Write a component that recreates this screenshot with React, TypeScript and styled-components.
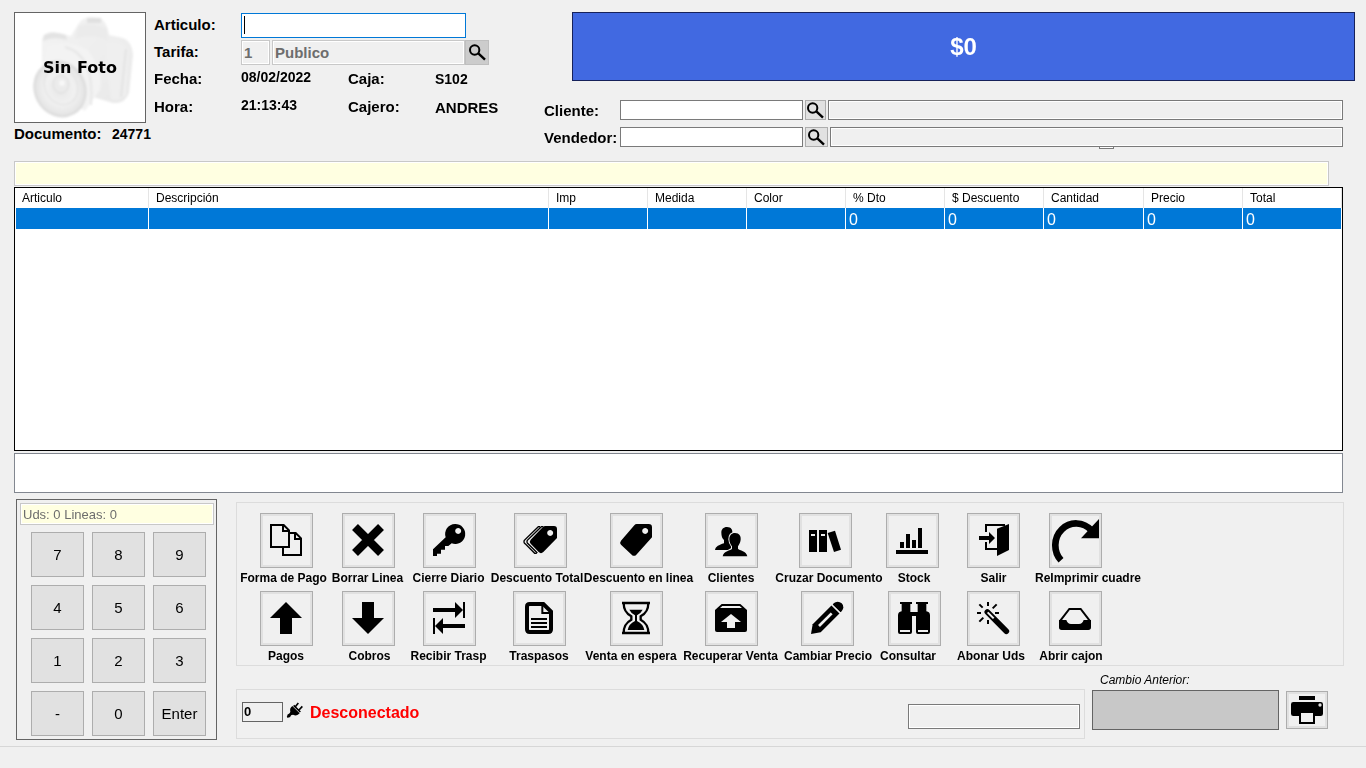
import React from 'react';
import styled, { createGlobalStyle } from 'styled-components';

const FACE = '#f0f0f0';
const CREAM = '#ffffe1';

const GlobalStyle = createGlobalStyle`
  * { box-sizing: border-box; }
  body {
    margin: 0;
    background: ${FACE};
    color: #000;
    font-family: "Liberation Sans", Arial, sans-serif;
    font-size: 12px;
  }
  button, input { font-family: inherit; margin: 0; border-radius: 0; }
`;

const Screen = styled.div`
  min-width: 1180px;
`;

const Header = styled.header`
  display: flex;
  padding: 12px 11px 0 14px;
  height: 149px;
`;

const PhotoColumn = styled.div`
  width: 140px;
  flex: none;
`;

const Photo = styled.figure`
  margin: 0;
  width: 132px;
  height: 111px;
  border: 1px solid #646464;
  background: #fff;
  display: grid;
  place-items: center;
`;

const CameraArt = styled.svg`
  grid-area: 1 / 1;
  width: 130px;
  height: 109px;
`;

const PhotoText = styled.figcaption`
  grid-area: 1 / 1;
  font: bold 16px "DejaVu Sans", sans-serif;
  z-index: 1;
`;

const DocumentRow = styled.div`
  display: flex;
  padding-top: 2px;
  line-height: 18px;
`;

const Label = styled.label<{ $w?: number }>`
  flex: none;
  width: ${p => (p.$w ? `${p.$w}px` : 'auto')};
  font-size: 15px;
  font-weight: bold;
  white-space: nowrap;
`;

const FieldLabel = styled(Label)`
  padding-bottom: 2px;
`;

const Value = styled.output<{ $w?: number; $raised?: boolean; $size?: number }>`
  flex: none;
  width: ${p => (p.$w ? `${p.$w}px` : 'auto')};
  padding-bottom: ${p => (p.$raised ? 4 : 0)}px;
  font-size: ${p => p.$size || 14}px;
  font-weight: bold;
`;

const Fields = styled.div`
  flex: none;
  width: 390px;
  padding-top: 1px;
`;

const FieldRow = styled.div<{ $h: number; $gap?: number }>`
  display: flex;
  align-items: center;
  height: ${p => p.$h}px;
  margin-bottom: ${p => p.$gap || 0}px;
`;

const TextBox = styled.input<{ $w?: number; $h: number; $line?: string; $fill?: string; $inset?: boolean }>`
  ${p => (p.$w ? `flex: none; width: ${p.$w}px;` : 'flex: 1; min-width: 0;')}
  height: ${p => p.$h}px;
  border: 1px solid ${p => p.$line || '#7a7a7a'};
  background: ${p => p.$fill || '#fff'};
  box-shadow: ${p => (p.$inset ? 'inset 0 0 0 1px #fff' : 'none')};
  padding: 0 2px;
  font-size: 15px;
  font-weight: bold;
  color: #6d6d6d;
  outline: none;
`;

const ArticleBox = styled(TextBox)`
  color: #000;
  caret-color: transparent;
  background: linear-gradient(#000, #000) 2px 2px / 1px 18px no-repeat #fff;
`;

const TariffGroup = styled.div`
  display: flex;
  gap: 2px;
`;

const LookupButton = styled.button<{ $w: number; $h: number; $fill?: string }>`
  flex: none;
  width: ${p => p.$w}px;
  height: ${p => p.$h}px;
  padding: 0;
  border: 1px solid ${p => (p.$fill ? '#bfbfbf' : '#adadad')};
  background: ${p => p.$fill || '#e1e1e1'};
  display: grid;
  place-items: center;
`;

const SaleColumn = styled.div`
  flex: 1;
  min-width: 0;
`;

const TotalBox = styled.div`
  margin-left: 28px;
  height: 69px;
  border: 1px solid #16215a;
  background: #4169e1;
  color: #fff;
  font-size: 24px;
  font-weight: bold;
  display: grid;
  place-items: center;
`;

const Parties = styled.div`
  padding: 18px 12px 0 0;
`;

const PartyRow = styled.div`
  position: relative;
  display: flex;
  align-items: center;
  gap: 2px;
  height: 22px;
  margin-bottom: 5px;
`;

const Notch = styled.span`
  position: absolute;
  right: 229px;
  top: 21px;
  width: 15px;
  height: 2px;
  border: 1px solid #7a7a7a;
  border-top: 0;
  background: #fff;
`;

const Main = styled.main`
  padding: 12px 22px 0 14px;
`;

const MessageBar = styled.div`
  height: 25px;
  margin-right: 15px;
  border: 1px solid #c8c8c8;
  background: ${CREAM};
  box-shadow: inset 0 0 0 1px #fff;
`;

const GridFrame = styled.div`
  height: 264px;
  margin: 1px 1px 2px 0;
  border: 1px solid #000;
  background: #fff;
`;

const LinesTable = styled.table`
  width: 100%;
  table-layout: fixed;
  border-collapse: separate;
  border-spacing: 0;
`;

const HeadCell = styled.th<{ $w?: number }>`
  width: ${p => (p.$w ? `${p.$w}px` : 'auto')};
  height: 20px;
  padding: 0 0 0 7px;
  border-right: 1px solid #e5e5e5;
  font-size: 12px;
  font-weight: normal;
  line-height: 16px;
  text-align: left;
`;

const Cell = styled.td`
  height: 21px;
  padding: 2px 0 0 3px;
  border-right: 1px solid #fff;
  background: #0078d7;
  color: #fff;
  font-size: 16px;
  line-height: 19px;

  &:first-child { border-left: 1px solid #fff; }
`;

const NotesBox = styled.div`
  height: 40px;
  margin-right: 1px;
  border: 1px solid #828790;
  background: #fff;
`;

const Bottom = styled.div`
  display: flex;
  align-items: flex-start;
  padding: 6px 0 6px 2px;
  gap: 19px;
`;

const Keypad = styled.section`
  flex: none;
  width: 201px;
  height: 241px;
  border: 1px solid #646464;
  padding: 3px 2px 0 3px;
`;

const CountBox = styled.output`
  display: block;
  height: 22px;
  padding-left: 2px;
  border: 1px solid #c8c8c8;
  background: ${CREAM};
  box-shadow: inset 0 0 0 1px #fff;
  color: #6d6d6d;
  font-size: 13px;
  line-height: 21px;
`;

const Keys = styled.div`
  display: grid;
  grid-template-columns: repeat(3, 53px);
  grid-auto-rows: 45px;
  gap: 8px;
  padding: 7px 0 0 11px;
`;

const Key = styled.button`
  padding: 0;
  border: 1px solid #adadad;
  background: #e1e1e1;
  color: #000;
  font-size: 15px;
`;

const RightSide = styled.div`
  flex: 1;
  min-width: 0;
`;

const Actions = styled.section`
  height: 164px;
  margin-top: 3px;
  border: 1px solid #dcdcdc;
  padding-top: 10px;
`;

const IconRow = styled.div<{ $cols: string }>`
  display: grid;
  grid-template-columns: ${p => p.$cols};
  justify-items: center;
  padding-left: 8px;
`;

const CaptionRow = styled.div<{ $cols: string }>`
  display: grid;
  grid-template-columns: ${p => p.$cols};
  padding: 2px 0 5px 4px;
`;

const Caption = styled.label`
  display: flex;
  justify-content: center;
  font-size: 12px;
  font-weight: bold;
  line-height: 16px;
  white-space: nowrap;
`;

const ActionButton = styled.button<{ $w?: number; $h?: number }>`
  width: ${p => p.$w || 53}px;
  height: ${p => p.$h || 55}px;
  padding: 0 1px 1px 0;
  border: 1px solid #adadad;
  background: ${FACE};
  box-shadow: inset 0 0 0 2px #e1e1e1;
  display: grid;
  place-items: center;
  color: #000;
`;

const Glyph = styled.svg`
  display: block;
  overflow: visible;
  fill: currentColor;
`;

const StatusRow = styled.div`
  display: flex;
  align-items: flex-end;
  gap: 7px;
  padding: 6px 16px 0 0;
`;

const StatusPanel = styled.section`
  flex: 1;
  min-width: 0;
  height: 50px;
  border: 1px solid #dcdcdc;
  padding: 0 4px 0 5px;
  display: flex;
  align-items: center;
`;

const QueueBox = styled.output`
  width: 41px;
  height: 20px;
  margin-bottom: 4px;
  border: 1px solid #646464;
  padding-left: 1px;
  font-weight: bold;
  font-size: 13px;
  line-height: 17px;
`;

const PlugSlot = styled.span`
  width: 16px;
  margin: 0 7px 8px 4px;
`;

const Connection = styled.strong`
  flex: 1;
  color: #f00;
  font-size: 16px;
  line-height: 20px;
  padding-bottom: 2px;
`;

const StatusBoxSlot = styled.div`
  display: flex;
  width: 172px;
  padding-top: 4px;
`;

const ChangeBlock = styled.div`
  width: 187px;
  padding-bottom: 9px;
`;

const ChangeLabel = styled.label`
  display: block;
  padding-left: 8px;
  margin-bottom: 2px;
  font-size: 12px;
  font-style: italic;
  line-height: 16px;
`;

const ChangeBox = styled.output`
  display: block;
  height: 40px;
  border: 1px solid #646464;
  background: #c8c8c8;
`;

const PrintSlot = styled.div`
  padding-bottom: 10px;
`;

const Footer = styled.footer`
  border-top: 1px solid #d7d7d7;
  height: 22px;
`;

const SearchIcon = () => (
  <Glyph width="17" height="17" viewBox="0 0 51 51" aria-hidden="true">
    <circle cx="17" cy="18" r="14" fill="none" stroke="#000" strokeWidth="6" />
    <path d="M28 28L48 47" stroke="#000" strokeWidth="7" />
  </Glyph>
);

const art: Record<string, React.ReactNode> = {
  copy: (
    <g fill="none" stroke="#000" strokeWidth="6">
      <path d="M3 3H41L57 19V69H3Z M39 3V21H57" />
      <path d="M60 27H77L93 43V93H39V72 M75 27V45H93" />
    </g>
  ),
  cross: <path d="M9 9L87 87M87 9L9 87" stroke="#000" strokeWidth="25" />,
  key: (
    <path
      fillRule="evenodd"
      d="M66 0a30 30 0 1 1-10 58L46 66H36V77H24V89H12V96H0V76L38 40A30 30 0 0 1 66 0ZM75 12a9 9 0 1 0 1 0Z"
    />
  ),
  tags: (
    <>
      <path
        fillRule="evenodd"
        d="M64 6H90Q99 6 99 15V42L58 84Q51 91 44 84L20 59Q15 53 20 47L56 10Q60 6 64 6ZM78 18a9 9 0 1 0 1 0Z"
      />
      <path
        d="M48 8H43L1 49Q-1 53 1 57L32 88H38M58 8H52L10 49Q8 53 10 57L40 87"
        fill="none"
        stroke="#000"
        strokeWidth="4"
      />
    </>
  ),
  tag: (
    <path
      fillRule="evenodd"
      d="M50 0H86Q96 0 96 10V40L49 92Q42 99 35 92L3 62Q-2 56 3 50L43 4Q46 0 50 0ZM75 12a9 9 0 1 0 1 0Z"
    />
  ),
  users: (
    <>
      <path d="M36 9C49 9 53 18 52 28C51 38 47 44 45 48V56C52 60 60 64 62 78H0C2 67 12 63 27 58V48C22 44 19 36 19 26C19 16 25 9 36 9Z" />
      <path
        d="M60 27C73 27 78 36 77 47C76 57 71 62 69 67V74C74 80 94 80 97 97H23C26 80 47 80 51 74V67C47 62 43 56 43 46C43 35 49 27 60 27Z"
        stroke={FACE}
        strokeWidth="6"
        paintOrder="stroke"
      />
    </>
  ),
  binders: (
    <>
      <path d="M0 18H24V84H0ZM30 18H54V84H30ZM56 27L78 20L96 77L75 84Z" />
      <path d="M6 30H18V36H6ZM36 30H48V36H36Z" fill={FACE} />
    </>
  ),
  chart: <path d="M0 78H96V90H0ZM12 54H24V72H12ZM30 30H42V72H30ZM48 48H60V72H48ZM66 12H78V72H66Z" />,
  exit: (
    <>
      <path d="M27 24V3H84M27 54V75H62" fill="none" stroke="#000" strokeWidth="6" />
      <path d="M60 14L96 0V78L60 96ZM6 36H36V24L54 42L36 60V48H6Z" />
    </>
  ),
  up: <path d="M48 0L96 48H66V96H30V48H0Z" />,
  down: <path d="M30 0H66V48H96L48 96L0 48H30Z" />,
  swap: (
    <path d="M0 18H66V0L90 24V0H96V48H90V24L66 48V30H0ZM0 48H6V72L30 48V66H96V78H30V96L6 72V96H0Z" />
  ),
  doc: (
    <>
      <path d="M20 6H61L84 29V82Q84 90 76 90H20Q12 90 12 82V14Q12 6 20 6Z" fill="none" stroke="#000" strokeWidth="12" />
      <path d="M58 8V33H86M24 51H72M24 63H72M24 75H72" fill="none" stroke="#000" strokeWidth="6" />
    </>
  ),
  hourglass: (
    <>
      <path
        d="M6 3H90M6 93H90M11 3C11 24 18 34 34 43V53C18 62 11 72 11 93M85 3C85 24 78 34 62 43V53C78 62 85 72 85 93"
        fill="none"
        stroke="#000"
        strokeWidth="7"
      />
      <path d="M28 23H68Q64 32 51 40V57Q70 66 73 84H23Q26 66 45 57V40Q32 32 28 23Z" />
    </>
  ),
  box: (
    <>
      <path d="M20 6H76L96 24V84Q96 90 90 90H6Q0 90 0 84V24Z" />
      <path d="M22 12H74L81 18H15ZM48 36L78 60H60V78H36V60H18Z" fill={FACE} />
    </>
  ),
  pencil: (
    <>
      <path d="M0 96L5 67L62 10L86 34L29 91Z" />
      <path d="M68 4A15 15 0 0 1 92 28L88 31L65 8Z" />
      <path d="M62 8L88 34" stroke={FACE} strokeWidth="4" />
      <path d="M24 72L62 34" stroke={FACE} strokeWidth="8" />
    </>
  ),
  binoculars: (
    <>
      <path d="M6 0H42V6H37V30H59V6H54V0H90V6H85V28Q96 30 96 40V90Q96 96 90 96H60Q54 96 54 90V54H42V90Q42 96 36 96H6Q0 96 0 90V40Q0 30 11 28V6H6Z" />
      <path d="M6 84H36V90H6ZM60 84H90V90H60ZM42 42H54V54H42Z" fill={FACE} />
    </>
  ),
  wand: (
    <>
      <path d="M31 30L88 88" stroke="#000" strokeWidth="17" strokeLinecap="round" />
      <path d="M32 31L50 49" stroke={FACE} strokeWidth="6" />
      <path
        d="M33 0V12M33 54V66M0 33H12M54 33H66M7 7L17 17M59 7L47 19M7 59L19 47"
        stroke="#000"
        strokeWidth="6"
      />
    </>
  ),
  tray: (
    <>
      <path d="M4 56L31 21H65L92 56" fill="none" stroke="#000" strokeWidth="6" />
      <path d="M0 54H22Q26 66 36 66H60Q70 66 74 54H96V76Q96 84 88 84H8Q0 84 0 76Z" />
    </>
  ),
  printer: (
    <>
      <path d="M24 6H72V18H24ZM7 24H89Q96 24 96 31V59Q96 66 89 66H7Q0 66 0 59V31Q0 24 7 24Z" />
      <path d="M27 54H69V87H27Z" fill={FACE} stroke="#000" strokeWidth="6" />
      <circle cx="87" cy="33" r="5" fill="#ddd" />
    </>
  ),
};

const ActionIcon = ({ name }: { name: string }) =>
  name === 'redo' ? (
    <Glyph width="47" height="47" viewBox="0 0 141 141" aria-hidden="true">
      <path d="M27 130A60 63 0 1 1 118 40" fill="none" stroke="#000" strokeWidth="20" />
      <path d="M141 6V64H87Z" />
    </Glyph>
  ) : (
    <Glyph width="32" height="32" viewBox="0 0 96 96" aria-hidden="true">
      {art[name]}
    </Glyph>
  );

const rows = [
  {
    icons: '83px 81px 81px 101px 91px 99px 89px 85px 77px 87px',
    captions: '85px 83px 79px 98px 105px 80px 116px 54px 105px 84px',
    items: [
      ['copy', 'Forma de Pago'],
      ['cross', 'Borrar Linea'],
      ['key', 'Cierre Diario'],
      ['tags', 'Descuento Total'],
      ['tag', 'Descuento en linea'],
      ['users', 'Clientes'],
      ['binders', 'Cruzar Documento'],
      ['chart', 'Stock'],
      ['exit', 'Salir'],
      ['redo', 'ReImprimir cuadre'],
    ],
  },
  {
    icons: '83px 81px 81px 99px 95px 95px 97px 77px 81px 83px',
    captions: '90px 77px 81px 100px 84px 115px 80px 80px 86px 74px',
    items: [
      ['up', 'Pagos'],
      ['down', 'Cobros'],
      ['swap', 'Recibir Trasp'],
      ['doc', 'Traspasos'],
      ['hourglass', 'Venta en espera'],
      ['box', 'Recuperar Venta'],
      ['pencil', 'Cambiar Precio'],
      ['binoculars', 'Consultar'],
      ['wand', 'Abonar Uds'],
      ['tray', 'Abrir cajon'],
    ],
  },
];

const columns: { name: string; width?: number; value: string }[] = [
  { name: 'Articulo', width: 134, value: '' },
  { name: 'Descripción', value: '' },
  { name: 'Imp', width: 99, value: '' },
  { name: 'Medida', width: 99, value: '' },
  { name: 'Color', width: 99, value: '' },
  { name: '% Dto', width: 99, value: '0' },
  { name: '$ Descuento', width: 99, value: '0' },
  { name: 'Cantidad', width: 100, value: '0' },
  { name: 'Precio', width: 99, value: '0' },
  { name: 'Total', width: 99, value: '0' },
];

const keys = ['7', '8', '9', '4', '5', '6', '1', '2', '3', '-', '0', 'Enter'];

const Camera = () => (
  <CameraArt viewBox="0 0 130 109" aria-hidden="true">
    <defs>
      <linearGradient id="body" x1="0" y1="0" x2="1" y2="1">
        <stop offset="0" stopColor="#f4f4f4" />
        <stop offset="1" stopColor="#e8e8e8" />
      </linearGradient>
      <radialGradient id="lens">
        <stop offset="0" stopColor="#e6e6e6" />
        <stop offset="0.55" stopColor="#f1f1f1" />
        <stop offset="0.8" stopColor="#eaeaea" />
        <stop offset="1" stopColor="#e2e2e2" />
      </radialGradient>
      <filter id="soft">
        <feGaussianBlur stdDeviation="1" />
      </filter>
    </defs>
    <g filter="url(#soft)">
      <path d="M27 26Q28 20 37 19L56 23L64 10Q68 4 76 4L86 5Q93 12 94 22L108 25Q117 28 118 42L114 80Q110 91 98 90L78 84L32 66L27 48Z" fill="url(#body)" />
      <path d="M63 13Q78 8 92 16L93 28Q78 20 60 26Z" fill="#ebebeb" />
      <path d="M72 5H86V10H72Z" fill="#e0e0e0" />
      <path d="M29 22Q38 17 51 22L52 27Q38 23 28 28Z" fill="#e3e3e3" />
      <path d="M90 30Q104 26 114 36L111 82Q104 89 96 86Q92 60 90 30Z" fill="#efefef" />
      <path d="M111 36L106 84" stroke="#e2e2e2" strokeWidth="2" />
      <path d="M31 33Q50 25 73 37Q89 58 85 77L70 98L24 70Z" fill="#f3f3f3" />
      <path d="M50 34Q80 42 76 92" fill="none" stroke="#e6e6e6" strokeWidth="2" />
      <ellipse cx="45" cy="76" rx="25" ry="28" transform="rotate(-28 45 76)" fill="url(#lens)" stroke="#dcdcdc" strokeWidth="2" />
      <ellipse cx="46" cy="73" rx="16" ry="19" transform="rotate(-28 46 73)" fill="none" stroke="#e0e0e0" />
      <ellipse cx="46" cy="71" rx="8" ry="9" fill="#ebebeb" stroke="#dcdcdc" />
      <circle cx="47" cy="70" r="3" fill="#f8f8f8" />
    </g>
  </CameraArt>
);

export default function App() {
  return (
    <Screen>
      <GlobalStyle />
      <Header>
        <PhotoColumn>
          <Photo>
            <Camera />
            <PhotoText>Sin Foto</PhotoText>
          </Photo>
          <DocumentRow>
            <Label $w={98} htmlFor="documento">Documento:</Label>
            <Value id="documento">24771</Value>
          </DocumentRow>
        </PhotoColumn>

        <Fields>
          <FieldRow $h={25} $gap={2}>
            <FieldLabel $w={87} htmlFor="articulo">Articulo:</FieldLabel>
            <ArticleBox id="articulo" $w={225} $h={25} $line="#0078d7" autoFocus />
          </FieldRow>
          <FieldRow $h={25}>
            <FieldLabel $w={87} htmlFor="tarifa">Tarifa:</FieldLabel>
            <TariffGroup>
              <TextBox id="tarifa" $w={29} $h={25} $line="#c8c8c8" $fill={FACE} $inset defaultValue="1" disabled />
              <TextBox aria-label="Nombre de tarifa" $w={193} $h={25} $line="#c8c8c8" $fill={FACE} $inset defaultValue="Publico" disabled />
            </TariffGroup>
            <LookupButton $w={24} $h={25} $fill="#cccccc" aria-label="Buscar tarifa"><SearchIcon /></LookupButton>
          </FieldRow>
          <FieldRow $h={28}>
            <FieldLabel $w={87} htmlFor="fecha">Fecha:</FieldLabel>
            <Value id="fecha" $w={107} $raised>08/02/2022</Value>
            <FieldLabel $w={87} htmlFor="caja">Caja:</FieldLabel>
            <Value id="caja">S102</Value>
          </FieldRow>
          <FieldRow $h={28}>
            <FieldLabel $w={87} htmlFor="hora">Hora:</FieldLabel>
            <Value id="hora" $w={107} $raised>21:13:43</Value>
            <FieldLabel $w={87} htmlFor="cajero">Cajero:</FieldLabel>
            <Value id="cajero" $size={15}>ANDRES</Value>
          </FieldRow>
        </Fields>

        <SaleColumn>
          <TotalBox>$0</TotalBox>
          <Parties>
            <PartyRow>
              <Label $w={74} htmlFor="cliente">Cliente:</Label>
              <TextBox id="cliente" $w={183} $h={20} />
              <LookupButton $w={21} $h={20} aria-label="Buscar cliente"><SearchIcon /></LookupButton>
              <TextBox aria-label="Nombre del cliente" $h={20} $fill={FACE} $inset readOnly />
            </PartyRow>
            <PartyRow>
              <Label $w={74} htmlFor="vendedor">Vendedor:</Label>
              <TextBox id="vendedor" $w={183} $h={20} />
              <LookupButton $w={23} $h={20} aria-label="Buscar vendedor"><SearchIcon /></LookupButton>
              <TextBox aria-label="Nombre del vendedor" $h={20} $fill={FACE} $inset readOnly />
              <Notch />
            </PartyRow>
          </Parties>
        </SaleColumn>
      </Header>

      <Main>
        <MessageBar />
        <GridFrame>
          <LinesTable>
            <thead>
              <tr>
                {columns.map(c => (
                  <HeadCell key={c.name} $w={c.width}>{c.name}</HeadCell>
                ))}
              </tr>
            </thead>
            <tbody>
              <tr>
                {columns.map(c => (
                  <Cell key={c.name}>{c.value}</Cell>
                ))}
              </tr>
            </tbody>
          </LinesTable>
        </GridFrame>
        <NotesBox />

        <Bottom>
          <Keypad>
            <CountBox>Uds: 0 Lineas: 0</CountBox>
            <Keys>
              {keys.map(k => (
                <Key key={k}>{k}</Key>
              ))}
            </Keys>
          </Keypad>

          <RightSide>
            <Actions>
              {rows.map(row => (
                <React.Fragment key={row.icons}>
                  <IconRow $cols={row.icons}>
                    {row.items.map(([icon]) => (
                      <ActionButton key={icon} id={`accion-${icon}`}>
                        <ActionIcon name={icon} />
                      </ActionButton>
                    ))}
                  </IconRow>
                  <CaptionRow $cols={row.captions}>
                    {row.items.map(([icon, text]) => (
                      <Caption key={icon} htmlFor={`accion-${icon}`}>{text}</Caption>
                    ))}
                  </CaptionRow>
                </React.Fragment>
              ))}
            </Actions>

            <StatusRow>
              <StatusPanel>
                <QueueBox>0</QueueBox>
                <PlugSlot>
                  <Glyph width="16" height="16" viewBox="0 0 48 48" aria-hidden="true">
                    <path d="M16 12L38 34Q30 44 18 38L12 40L9 46H1V38L8 34L10 29Q7 19 16 12Z" />
                    <path d="M20 10L40 30M25 14L34 3M36 24L46 13M1 46L12 35" stroke="#000" strokeWidth="5" />
                  </Glyph>
                </PlugSlot>
                <Connection>Desconectado</Connection>
                <StatusBoxSlot>
                  <TextBox aria-label="Estado" $h={25} $fill={FACE} $inset readOnly />
                </StatusBoxSlot>
              </StatusPanel>
              <ChangeBlock>
                <ChangeLabel htmlFor="cambio">Cambio Anterior:</ChangeLabel>
                <ChangeBox id="cambio" />
              </ChangeBlock>
              <PrintSlot>
                <ActionButton $w={42} $h={38} aria-label="Imprimir">
                  <ActionIcon name="printer" />
                </ActionButton>
              </PrintSlot>
            </StatusRow>
          </RightSide>
        </Bottom>
      </Main>
      <Footer />
    </Screen>
  );
}
